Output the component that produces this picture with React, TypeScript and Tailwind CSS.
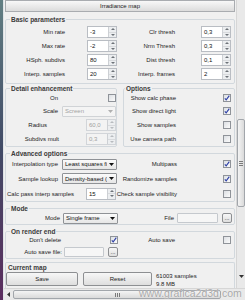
import React from 'react';

// small win7-style controls used by the rollout
const Check = ({ checked = false }: { checked?: boolean }) => (
  <div className="w-[8px] h-[8px] shrink-0 border border-[#8f9399] bg-gradient-to-br from-[#dcdfe3] to-[#fbfbfb] flex items-center justify-center">
    {checked && (
      <svg width="6" height="6" viewBox="0 0 6 6">
        <path d="M0.8 3.3 L2.2 4.9 L5.3 0.7" fill="none" stroke="#2d3fa6" strokeWidth="1.1" />
      </svg>
    )}
  </div>
);

const Spinner = ({ value, disabled = false }: { value: string; disabled?: boolean }) => (
  <div
    className={`w-[30px] h-[12px] shrink-0 flex border ${
      disabled ? 'border-[#d2d5d9] bg-[#f3f3f3]' : 'border-[#b9bdc3] bg-white'
    }`}
  >
    <div className={`flex-1 pl-[2px] flex items-center text-[6px] leading-none ${disabled ? 'text-[#a0a0a0]' : 'text-[#111]'}`}>
      {value}
    </div>
    <div className="w-[8px] flex flex-col border-l border-[#cdd0d4] bg-[#eceef0]">
      <div className="flex-1 flex items-center justify-center border-b border-[#d8dadd]">
        <svg width="4" height="2" viewBox="0 0 4 2">
          <path d="M0 2 L2 0 L4 2Z" fill={disabled ? '#b8bbbf' : '#6d7278'} />
        </svg>
      </div>
      <div className="flex-1 flex items-center justify-center">
        <svg width="4" height="2" viewBox="0 0 4 2">
          <path d="M0 0 L2 2 L4 0Z" fill={disabled ? '#b8bbbf' : '#6d7278'} />
        </svg>
      </div>
    </div>
  </div>
);

const Combo = ({ value, className, disabled = false }: { value: string; className: string; disabled?: boolean }) => (
  <div
    className={`${className} h-[11px] shrink-0 flex items-center border rounded-[1px] ${
      disabled ? 'border-[#d0d3d6] bg-[#f4f4f4]' : 'border-[#8f9296] bg-gradient-to-b from-[#fbfbfb] to-[#e6e6e6]'
    }`}
  >
    <div className={`flex-1 pl-[2px] overflow-hidden whitespace-nowrap text-[6px] leading-none ${disabled ? 'text-[#a3a3a3]' : 'text-[#111]'}`}>
      {value}
    </div>
    <div className="w-[9px] flex justify-center">
      <svg width="5" height="3" viewBox="0 0 5 3">
        <path d="M0 0 L2.5 3 L5 0Z" fill={disabled ? '#b0b0b0' : '#111'} />
      </svg>
    </div>
  </div>
);

const TextBox = ({ className }: { className: string }) => (
  <div className={`${className} h-[10px] shrink-0 border border-[#c5c9ce] bg-[#f6f6f6] rounded-[1px]`} />
);

const Btn = ({ label, className }: { label: string; className: string }) => (
  <div
    className={`${className} shrink-0 border border-[#8d8f92] rounded-[2px] bg-gradient-to-b from-[#f7f7f7] to-[#dedede] flex items-center justify-center text-[6px] leading-none text-[#1a1a1a]`}
  >
    {label}
  </div>
);

const Label = ({ children, className }: { children: React.ReactNode; className: string }) => (
  <div className={`${className} shrink-0 whitespace-nowrap text-[6px] leading-none text-[#1c1c1c]`}>{children}</div>
);

const Group = ({
  title,
  className = '',
  legend = 'ml-[4px]',
  children,
}: {
  title: string;
  className?: string;
  legend?: string;
  children: React.ReactNode;
}) => (
  <fieldset className={`border border-[#d2d8dd] rounded-[2px] min-w-0 ${className}`}>
    <legend className={`${legend} px-[1px] text-[6.5px] font-bold leading-[7px] text-[#3a3a3a]`}>{title}</legend>
    {children}
  </fieldset>
);

const App = () => {
  return (
    <div className="w-[245px] h-[300px] flex bg-[#f0f0f0] overflow-hidden relative font-['Liberation_Sans',Arial,sans-serif]">
      {/* window edge */}
      <div className="w-[3px] bg-gradient-to-b from-[#627f83] via-[#414a66] to-[#5a2c5e]" />
      <div className="w-[1px] bg-[#dfe3e6]" />

      <div className="flex-1 flex flex-col">
        <div className="h-[288px] flex">
          {/* Rollout content */}
          <div className="w-[232px] flex flex-col overflow-hidden">
            <div className="mx-[1px] h-[12px] shrink-0 border border-[#a9acb0] bg-gradient-to-b from-[#f8f8f8] to-[#dcdcdc] flex items-center justify-center text-[6px] leading-none text-[#1a1a1a]">
              Irradiance map
            </div>

            <div className="pl-[1px] pr-[1px] mt-[4px] flex flex-col">
              {/* Basic parameters */}
              <Group title="Basic parameters">
                <div className="pt-[2px] pb-[2px]">
                  {[
                    ['Min rate', '-3', 'Clr thresh', '0,3'],
                    ['Max rate', '-2', 'Nrm Thresh', '0,3'],
                    ['HSph. subdivs', '80', 'Dist thresh', '0,1'],
                    ['Interp. samples', '20', 'Interp. frames', '2'],
                  ].map(([l1, v1, l2, v2]) => (
                    <div key={l1} className="h-[14px] flex items-center">
                      <Label className="w-[59px] text-right">{l1}</Label>
                      <div className="ml-[22px]">
                        <Spinner value={v1} />
                      </div>
                      <Label className="w-[58px] text-right">{l2}</Label>
                      <div className="ml-[26px]">
                        <Spinner value={v2} />
                      </div>
                    </div>
                  ))}
                </div>
              </Group>

              {/* Detail enhancement + Options */}
              <div className="mt-[1px] flex gap-[6px]">
                <Group title="Detail enhancement" className="w-[112px]">
                  <div className="h-[12px] flex items-center">
                    <Label className="w-[52px] text-right">On</Label>
                    <div className="ml-[50px]">
                      <Check />
                    </div>
                  </div>
                  <div className="h-[14px] flex items-center">
                    <Label className="w-[52px] text-right">Scale</Label>
                    <div className="ml-[4px]">
                      <Combo value="Screen" className="w-[54px]" disabled />
                    </div>
                  </div>
                  <div className="h-[14px] flex items-center">
                    <Label className="w-[41px] text-right">Radius</Label>
                    <div className="ml-[39px]">
                      <Spinner value="60,0" disabled />
                    </div>
                  </div>
                  <div className="h-[14px] flex items-center">
                    <Label className="w-[53px] text-right">Subdivs mult</Label>
                    <div className="ml-[27px]">
                      <Spinner value="0,3" disabled />
                    </div>
                  </div>
                </Group>

                <Group title="Options" className="flex-1" legend="ml-[1px]">
                  {[
                    ['Show calc phase', true, 'h-[12px]'],
                    ['Show direct light', true, 'h-[14px]'],
                    ['Show samples', false, 'h-[14px]'],
                    ['Use camera path', false, 'h-[14px]'],
                  ].map(([l, c, h]) => (
                    <div key={l as string} className={`${h} flex items-center`}>
                      <Label className="w-[52px] text-right">{l as string}</Label>
                      <div className="ml-[47px]">
                        <Check checked={c as boolean} />
                      </div>
                    </div>
                  ))}
                </Group>
              </div>

              {/* Advanced options */}
              <Group title="Advanced options" className="mt-[3px]">
                <div className="h-[14px] flex items-center">
                  <Label className="w-[52px] text-right">Interpolation type</Label>
                  <div className="ml-[4px]">
                    <Combo value="Least squares fi" className="w-[55px]" />
                  </div>
                  <Label className="w-[60px] text-right">Multipass</Label>
                  <div className="ml-[46px]">
                    <Check checked />
                  </div>
                </div>
                <div className="h-[15px] flex items-center">
                  <Label className="w-[52px] text-right">Sample lookup</Label>
                  <div className="ml-[4px]">
                    <Combo value="Density-based (" className="w-[55px]" />
                  </div>
                  <Label className="w-[60px] text-right">Randomize samples</Label>
                  <div className="ml-[46px]">
                    <Check checked />
                  </div>
                </div>
                <div className="h-[15px] flex items-center">
                  <Label className="w-[80px] pl-[1px]">Calc pass interp samples</Label>
                  <Spinner value="15" />
                  <Label className="w-[61px] text-right">Check sample visibility</Label>
                  <div className="ml-[46px]">
                    <Check />
                  </div>
                </div>
              </Group>

              {/* Mode */}
              <Group title="Mode" className="mt-[3px]">
                <div className="h-[12px] flex items-center">
                  <Label className="w-[54px] text-right">Mode</Label>
                  <div className="ml-[3px]">
                    <Combo value="Single frame" className="w-[55px]" />
                  </div>
                  <Label className="w-[56px] text-right">File</Label>
                  <div className="ml-[3px]">
                    <TextBox className="w-[41px]" />
                  </div>
                  <div className="ml-[4px]">
                    <Btn label="..." className="w-[10px] h-[10px]" />
                  </div>
                </div>
              </Group>

              {/* On render end */}
              <Group title="On render end" className="mt-[3px]">
                <div className="h-[10px] flex items-center">
                  <Label className="w-[55px] text-right">Don't delete</Label>
                  <div className="ml-[49px]">
                    <Check checked />
                  </div>
                  <Label className="w-[57px] text-right">Auto save</Label>
                  <div className="ml-[48px]">
                    <Check />
                  </div>
                </div>
                <div className="h-[13px] flex items-center">
                  <Label className="w-[56px] text-right">Auto save file:</Label>
                  <div className="ml-[2px]">
                    <TextBox className="w-[40px]" />
                  </div>
                  <div className="ml-[4px]">
                    <Btn label="..." className="w-[10px] h-[10px]" />
                  </div>
                </div>
              </Group>

              {/* Current map */}
              <div className="mt-[3px] border-t border-l border-r border-[#d2d8dd] rounded-t-[2px] h-[40px]">
                <div className="pl-[2px] pt-[1px] h-[9px] text-[6.5px] font-bold leading-[8px] text-[#3a3a3a]">Current map</div>
                <div className="flex">
                  <Btn label="Save" className="w-[72px] h-[14px]" />
                  <div className="ml-[5px]">
                    <Btn label="Reset" className="w-[69px] h-[14px]" />
                  </div>
                  <div className="ml-[4px] text-[6px] leading-[8px] text-[#1c1c1c]">
                    <div>61003 samples</div>
                    <div>9.8 MB</div>
                  </div>
                </div>
              </div>
            </div>
          </div>

          {/* vertical scrollbar */}
          <div className="w-[9px] flex flex-col bg-[#e9e9e9] border-l border-[#d6d6d6]">
            <div className="h-[119px]" />
            <div className="h-[88px] rounded-[2px] border border-[#a2a6ab] bg-gradient-to-r from-[#f4f4f4] to-[#dadada] flex flex-col items-center justify-center gap-[1px]">
              <div className="w-[4px] h-px bg-[#7a7a7a]" />
              <div className="w-[4px] h-px bg-[#7a7a7a]" />
              <div className="w-[4px] h-px bg-[#7a7a7a]" />
            </div>
            <div className="flex-1" />
            <div className="h-[12px] flex items-center justify-center">
              <svg width="5" height="3" viewBox="0 0 5 3">
                <path d="M0 0 L2.5 3 L5 0Z" fill="#333" />
              </svg>
            </div>
            <div className="h-[6px]" />
          </div>
        </div>

        {/* horizontal scrollbar */}
        <div className="h-[12px] flex items-center bg-[#e9e9e9] border-t border-[#d6d6d6]">
          <div className="w-[9px] flex justify-center">
            <svg width="3" height="5" viewBox="0 0 3 5">
              <path d="M3 0 L0 2.5 L3 5Z" fill="#333" />
            </svg>
          </div>
          <div className="w-[208px] h-[9px] rounded-[2px] border border-[#a2a6ab] bg-gradient-to-b from-[#f4f4f4] to-[#dadada] flex items-center justify-center gap-[1px]">
            <div className="w-px h-[4px] bg-[#7a7a7a]" />
            <div className="w-px h-[4px] bg-[#7a7a7a]" />
            <div className="w-px h-[4px] bg-[#7a7a7a]" />
          </div>
        </div>
      </div>

      {/* watermark */}
      <div className="absolute left-[139px] top-[287px] text-[10.5px] leading-[13px] text-[#a7a7a7] [text-shadow:0_0_1px_#fff]">
        www.grafica2d3d.com
      </div>
    </div>
  );
};

export default App;
